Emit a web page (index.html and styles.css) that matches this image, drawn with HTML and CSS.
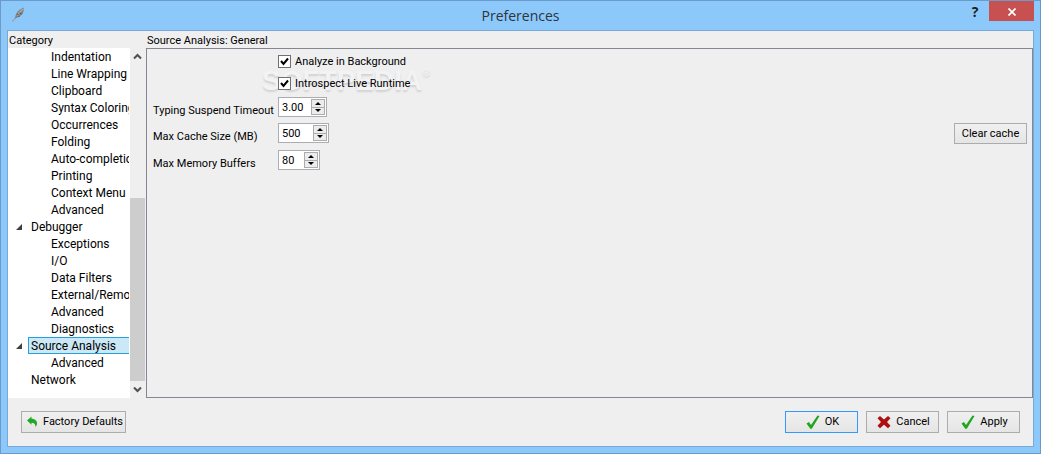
FILE: index.html
```html
<!DOCTYPE html>
<html lang="en">
<head>
<meta charset="utf-8">
<title>Preferences</title>
<link rel="stylesheet" href="styles.css">
</head>
<body>
<div class="window">
  <header class="titlebar">
    <svg class="app-icon" width="16" height="16" viewBox="0 0 16 16" aria-hidden="true">
      <path d="M1.500 15.500L5 11" stroke="#9a9da0" stroke-width="1.200"/>
      <path d="M4 12.500C4 9 6 5.500 9 3.500L12.500 1.500C13 4 12.500 6 11.500 8 10 10 7.500 11 4 12.500z" fill="#808284"/>
      <path d="M6.500 10C7.500 7.500 9.500 5 12 3" stroke="#a9acaf" stroke-width="1.500" fill="none"/>
      <path d="M7 10l1.500 .500M8.500 7l2 1M6 8l1.500.500" stroke="#505254" stroke-width="1"/>
    </svg>
    <h1 class="title">Preferences</h1>
    <button class="help" type="button" aria-label="Help">?</button>
    <button class="close" type="button" aria-label="Close">
      <svg width="8" height="8" viewBox="0 0 8 8"><path d="M.500.500l7 7M7.500.500l-7 7" stroke="#fff" stroke-width="1.700"/></svg>
    </button>
  </header>
  <main class="client">
    <div class="columns">
      <section class="sidebar">
        <h2 class="heading">Category</h2>
        <div class="tree-box">
          <ul class="tree">
            <li class="leaf">Indentation</li>
            <li class="leaf">Line Wrapping</li>
            <li class="leaf">Clipboard</li>
            <li class="leaf">Syntax Coloring</li>
            <li class="leaf">Occurrences</li>
            <li class="leaf">Folding</li>
            <li class="leaf">Auto-completion</li>
            <li class="leaf">Printing</li>
            <li class="leaf">Context Menu</li>
            <li class="leaf">Advanced</li>
            <li class="branch"><svg class="arrow" width="6" height="6" viewBox="0 0 6 6"><path d="M6 0v6H0z"/></svg><span class="name">Debugger</span></li>
            <li class="leaf">Exceptions</li>
            <li class="leaf">I/O</li>
            <li class="leaf">Data Filters</li>
            <li class="leaf">External/Remote</li>
            <li class="leaf">Advanced</li>
            <li class="leaf">Diagnostics</li>
            <li class="branch"><svg class="arrow" width="6" height="6" viewBox="0 0 6 6"><path d="M6 0v6H0z"/></svg><span class="name selected">Source Analysis</span></li>
            <li class="leaf">Advanced</li>
            <li class="branch"><span class="arrow"></span><span class="name">Network</span></li>
          </ul>
          <div class="scrollbar">
            <button class="scroll-button" type="button" aria-label="Scroll up"><svg width="9" height="7" viewBox="0 0 9 7"><path d="M1 5.500l3.500-3.500 3.500 3.500" fill="none" stroke="#505050" stroke-width="2"/></svg></button>
            <div class="track"><div class="thumb"></div></div>
            <button class="scroll-button" type="button" aria-label="Scroll down"><svg width="9" height="7" viewBox="0 0 9 7"><path d="M1 1.500l3.500 3.500 3.500-3.500" fill="none" stroke="#505050" stroke-width="2"/></svg></button>
          </div>
        </div>
      </section>
      <section class="content">
        <h2 class="heading">Source Analysis: General</h2>
        <form class="panel">
          <label class="check"><input type="checkbox" checked>Analyze in Background</label>
          <label class="check"><input type="checkbox" checked>Introspect Live Runtime</label>
          <label class="label" for="timeout">Typing Suspend Timeout</label>
          <div class="spin">
            <input class="digits-4" id="timeout" type="number" step="0.01" value="3.00">
            <div class="steps"><button class="step" type="button" aria-label="Increase"><svg width="6" height="3" viewBox="0 0 6 3"><path d="M0 3l3-3 3 3z"/></svg></button><button class="step" type="button" aria-label="Decrease"><svg width="6" height="3" viewBox="0 0 6 3"><path d="M0 0l3 3 3-3z"/></svg></button></div>
          </div>
          <label class="label" for="cache">Max Cache Size (MB)</label>
          <div class="spin">
            <input class="digits-5" id="cache" type="number" value="500">
            <div class="steps"><button class="step" type="button" aria-label="Increase"><svg width="6" height="3" viewBox="0 0 6 3"><path d="M0 3l3-3 3 3z"/></svg></button><button class="step" type="button" aria-label="Decrease"><svg width="6" height="3" viewBox="0 0 6 3"><path d="M0 0l3 3 3-3z"/></svg></button></div>
          </div>
          <button class="button clear" type="button">Clear cache</button>
          <label class="label" for="buffers">Max Memory Buffers</label>
          <div class="spin">
            <input class="digits-3" id="buffers" type="number" value="80">
            <div class="steps"><button class="step" type="button" aria-label="Increase"><svg width="6" height="3" viewBox="0 0 6 3"><path d="M0 3l3-3 3 3z"/></svg></button><button class="step" type="button" aria-label="Decrease"><svg width="6" height="3" viewBox="0 0 6 3"><path d="M0 0l3 3 3-3z"/></svg></button></div>
          </div>
          <div class="watermark">SOFTPEDIA<span class="mark">®</span></div>
        </form>
      </section>
    </div>
    <footer class="footer">
      <button class="button factory" type="button">
        <svg width="12" height="12" viewBox="0 0 12 12"><path d="M1 4.500L5.500.500v2.300c4 0 6 2.500 5.500 5.500-.200 1.200-.800 2-1.500 2.700C9.500 8.500 8.500 6.700 5.500 6.700v2z" fill="#22a822"/></svg>
        Factory Defaults
      </button>
      <div class="actions">
        <button class="button action default" type="button">
          <svg width="14" height="14" viewBox="0 0 14 14"><path d="M.500 8.500L3 7l2 3L11.500.500l2 .500L5.800 13.700H4.300z" fill="#1fa51f"/></svg>
          OK
        </button>
        <button class="button action" type="button">
          <svg width="14" height="14" viewBox="0 0 14 14"><path d="M3 1l4 3.500L11 1l2.500 2.200L10 7l3.500 3.800L11 13.200 7 9.700l-4 3.500L.500 10.800 4 7 .500 3.200z" fill="#ad1010"/></svg>
          Cancel
        </button>
        <button class="button action" type="button">
          <svg width="14" height="14" viewBox="0 0 14 14"><path d="M.500 8.500L3 7l2 3L11.500.500l2 .500L5.800 13.700H4.300z" fill="#1fa51f"/></svg>
          Apply
        </button>
      </div>
    </footer>
  </main>
</div>
</body>
</html>
```
FILE: styles.css
```css
* { box-sizing: border-box; }

body {
  margin: 0;
  font: 11px/14px Roboto, sans-serif;
  color: #000;
}

h1, h2, ul { margin: 0; padding: 0; font-weight: normal; }
button, input { font: inherit; color: inherit; }
svg { flex: none; }

.window {
  display: flex;
  flex-direction: column;
  min-height: 100vh;
  padding: 0 6px 6px;
  border: 1px solid #6b9bcb;
  background: #8dc8fb;
}

/* Title bar */
.titlebar {
  display: grid;
  grid-template-columns: 83px 1fr 28px 45px;
  align-items: start;
  height: 29px;
}
.app-icon { margin: 5px 0 0 4px; }
.title {
  padding: 5px 0 0 10px;
  margin-right: 20px;
  font: 14px/20px "Open Sans", sans-serif;
  text-align: center;
  color: #2b3540;
}
.help {
  height: 20px;
  padding: 2px 0 0;
  border: 0;
  background: none;
  font: bold 14px/18px "Open Sans", sans-serif;
  color: #1e1e1e;
}
.close {
  display: grid;
  place-items: center;
  height: 20px;
  padding: 2px 0 0;
  border: 0;
  background: #c75050;
}

/* Client area */
.client {
  display: flex;
  flex: 1;
  flex-direction: column;
  border: 1px solid #78a9d8;
  background: #efefef;
}
.columns { display: flex; flex: 1; }
.heading {
  padding: 3px 1px 0;
  font-size: 11px;
  line-height: 14px;
}
.sidebar {
  display: flex;
  flex-direction: column;
  width: 138px;
  padding-right: 1px;
}
.tree-box { display: flex; flex: 1; }
.tree {
  flex: 1;
  min-width: 0;
  padding-right: 1px;
  background: #fff;
  font: 12px/19px Roboto, sans-serif;
  list-style: none;
}
.leaf {
  height: 17px;
  margin-left: 43px;
  overflow: hidden;
  white-space: nowrap;
}
.branch {
  display: flex;
  align-items: center;
  height: 17px;
  padding-left: 8px;
}
.arrow { flex: none; width: 6px; margin-right: 6px; fill: #404040; }
.name {
  flex: 1;
  min-width: 0;
  height: 17px;
  overflow: hidden;
  padding: 0 2px;
  border: 1px solid transparent;
  border-right: 0;
  line-height: 17px;
  white-space: nowrap;
}
.selected { border-color: #26a0da; background: #cbe8f6; }

.scrollbar {
  display: flex;
  flex-direction: column;
  width: 15px;
}
.scroll-button {
  display: grid;
  place-items: center;
  height: 17px;
  padding: 0;
  border: 0;
  background: none;
}
.track { display: flex; flex: 1; align-items: flex-end; }
.thumb { width: 100%; height: 58%; background: #cdcdcd; }

.content { display: flex; flex: 1; flex-direction: column; }
.panel {
  position: relative;
  isolation: isolate;
  display: grid;
  flex: 1;
  grid-template-columns: 119px auto 1fr;
  align-content: start;
  align-items: start;
  gap: 6px;
  padding: 4px 5px 4px 6px;
  border: 1px solid #828790;
}
.check {
  display: flex;
  grid-column: 2 / -1;
  align-items: center;
  gap: 4px;
  height: 16px;
  padding-top: 1px;
}
.check input {
  appearance: none;
  width: 13px;
  height: 13px;
  margin: 0;
  border: 1px solid #707070;
  background: #fff url("data:image/svg+xml,%3Csvg xmlns='http://www.w3.org/2000/svg' viewBox='0 0 11 11'%3E%3Cpath d='M2 5l2.500 3L9 2.500' fill='none' stroke='%23000' stroke-width='2'/%3E%3C/svg%3E");
}
.label {
  grid-column: 1;
  height: 20px;
  padding-top: 7px;
  white-space: nowrap;
}
.spin {
  display: flex;
  justify-self: start;
  height: 20px;
  padding: 1px;
  border: 1px solid #abadb3;
  background: #fff;
}
.spin input {
  appearance: textfield;
  padding: 1px 2px 0;
  border: 0;
  background: none;
}
.spin input::-webkit-inner-spin-button { appearance: none; margin: 0; }
.digits-3 { width: 24px; }
.digits-4 { width: 31px; }
.digits-5 { width: 33px; }
.steps {
  display: grid;
  width: 14px;
  border: 1px solid #acacac;
}
.step {
  display: grid;
  place-items: center;
  min-height: 0;
  padding: 0;
  border: 0;
  background: #ececec;
}
.step + .step { border-top: 1px solid #acacac; }

.watermark {
  position: absolute;
  z-index: -1;
  top: 15px;
  left: 115px;
  font: bold 28px/34px "Liberation Sans", sans-serif;
  color: #f3f3f3;
  text-shadow: 0 2px 2px rgba(0, 0, 0, 0.12);
  pointer-events: none;
}
.mark { font-size: 11px; vertical-align: top; line-height: 16px; }

/* Buttons */
.button {
  display: flex;
  align-items: center;
  justify-content: center;
  gap: 5px;
  height: 22px;
  padding: 0 3px 0 5px;
  border: 1px solid #acacac;
  background: linear-gradient(#f0f0f0, #e5e5e5);
  white-space: nowrap;
}
.clear { justify-self: end; width: 73px; height: 21px; padding: 0; }
.footer {
  display: flex;
  justify-content: space-between;
  padding: 13px;
}
.factory { width: 105px; }
.actions { display: flex; gap: 8px; }
.action { width: 73px; }
.default { border-color: #3399ff; }
```
